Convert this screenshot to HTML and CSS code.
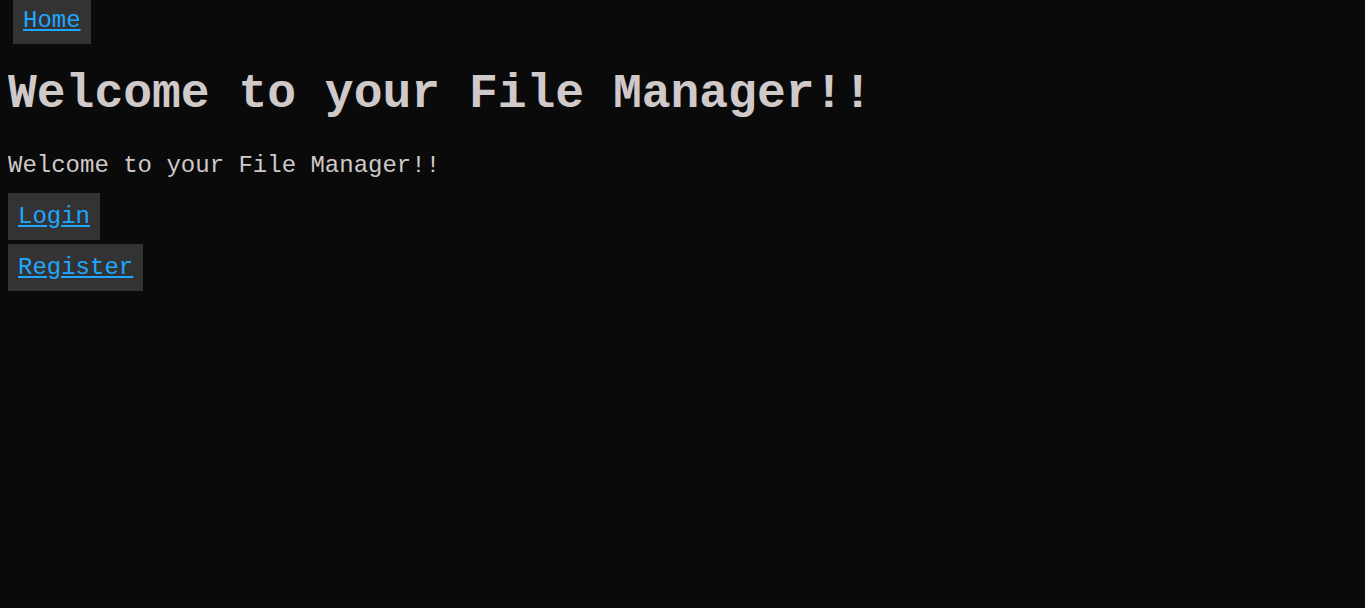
FILE: index.html
```html
<!DOCTYPE html>
<html lang="en">
<head>
<meta charset="utf-8">
<title>File Manager</title>
<link rel="stylesheet" href="styles.css">
</head>
<body>
<nav class="nav">
  <a class="btn nav-link" href="#">Home</a>
</nav>
<h1 class="title">Welcome to your File Manager!!</h1>
<p class="lead">Welcome to your File Manager!!</p>
<div class="actions">
  <a class="btn" href="#">Login</a>
  <a class="btn" href="#">Register</a>
</div>
</body>
</html>
```

FILE: styles.css
```css
html {
  background: #0a0a0a;
}
body {
  margin: 0 8px;
  font-family: "Liberation Mono", "Courier New", monospace;
  color: #d0c9c9;
  font-size: 24px;
}
.nav {
  display: flex;
  padding-left: 5px;
  height: 44px;
}
.btn {
  display: inline-block;
  background: #333333;
  color: #1ea7ff;
  padding: 10px;
  text-decoration: underline;
  line-height: 27px;
}
.nav-link {
  padding-top: 7px;
  padding-bottom: 10px;
}
.title {
  font-size: 48px;
  font-weight: bold;
  margin: 23px 0 31px;
  line-height: 54px;
}
.lead {
  margin: 0 0 14px;
  line-height: 27px;
}
.actions {
  display: flex;
  flex-direction: column;
  align-items: flex-start;
  gap: 4px;
}
```
